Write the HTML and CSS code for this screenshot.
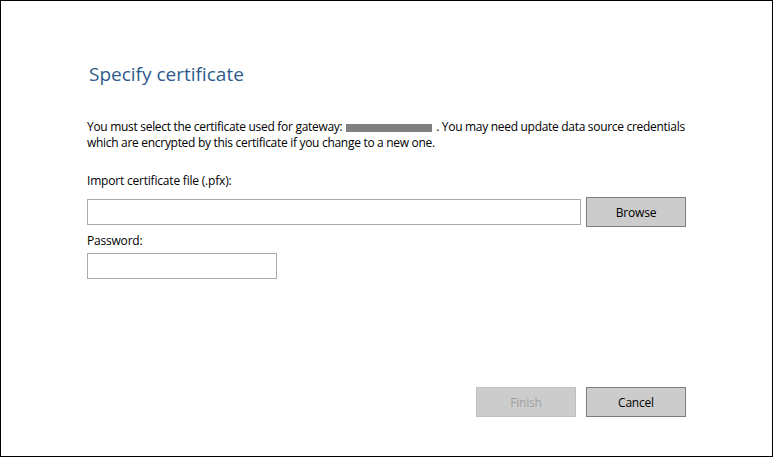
FILE: index.html
```html
<!DOCTYPE html>
<html>
<head>
<meta charset="utf-8">
<link rel="stylesheet" href="styles.css">
</head>
<body>
<div class="frame">
  <h1 class="title">Specify certificate</h1>
  <p class="desc">You must select the certificate used for gateway: <span class="redact"></span>. You may need update data source credentials which are encrypted by this certificate if you change to a new one.</p>
  <label class="label">Import certificate file (.pfx):</label>
  <div class="row">
    <div class="input wide"></div>
    <button class="btn">Browse</button>
  </div>
  <label class="label pw">Password:</label>
  <div class="input short"></div>
  <div class="spacer"></div>
  <div class="actions">
    <button class="btn disabled">Finish</button>
    <button class="btn">Cancel</button>
  </div>
</div>
</body>
</html>
```
FILE: styles.css
```css
html, body {
  margin: 0;
  padding: 0;
  background: #fff;
}
.frame {
  box-sizing: border-box;
  width: 773px;
  height: 457px;
  border: 1px solid #000;
  padding: 58px 86px 39px 86px;
  display: flex;
  flex-direction: column;
  font-family: "Open Sans", "Noto Sans", sans-serif;
  font-size: 12px;
  color: #000;
}
.title {
  margin: 0 0 0 2px;
  font-size: 19px;
  font-weight: normal;
  line-height: 30px;
  color: #2e5b8c;
}
.desc {
  margin: 30px 0 0 0;
  width: 610px;
  line-height: 16px;
  letter-spacing: -0.3px;
}
.redact {
  display: inline-block;
  width: 86px;
  height: 8px;
  background: #808080;
  vertical-align: -1px;
  margin-left: 1px;
  margin-right: 4px;
}
.label {
  display: block;
  line-height: 16px;
  margin-top: 22px;
  letter-spacing: -0.2px;
}
.label.pw {
  margin-top: 6px;
}
.row {
  display: flex;
  align-items: center;
  gap: 5px;
  margin-top: 8px;
}
.input {
  box-sizing: border-box;
  height: 26px;
  border: 1px solid #aaaaaa;
  background: #fff;
}
.input.wide {
  width: 494px;
}
.input.short {
  width: 190px;
  margin-top: 4px;
}
.spacer {
  flex: 1;
}
.actions {
  display: flex;
  justify-content: flex-end;
  gap: 10px;
}
.btn {
  box-sizing: border-box;
  width: 100px;
  height: 30px;
  border: 1px solid #7a7a7a;
  background: #cccccc;
  font-family: inherit;
  font-size: 12px;
  letter-spacing: -0.2px;
  color: #000;
  padding: 0;
}
.btn.disabled {
  border-color: #bfbfbf;
  color: #a0a0a0;
}
```
